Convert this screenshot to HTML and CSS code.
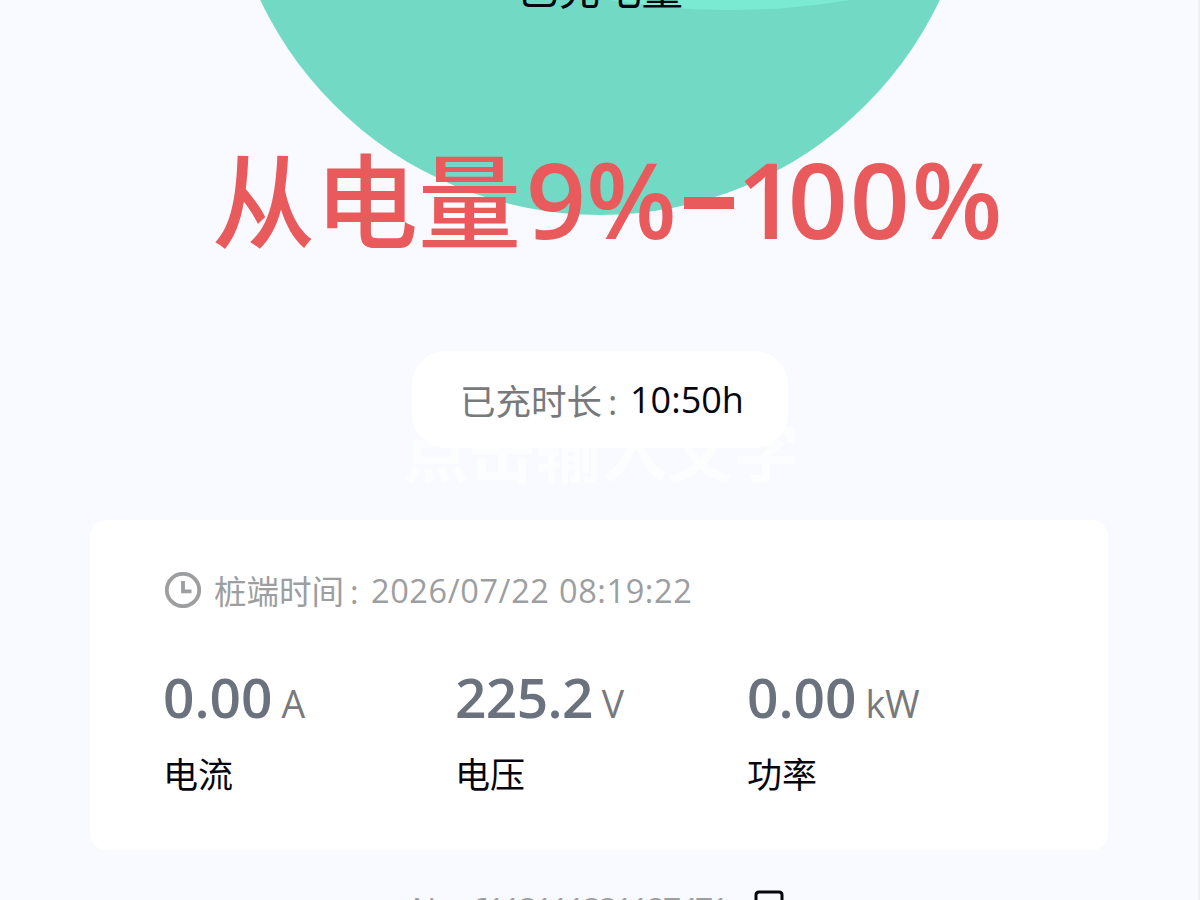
FILE: index.html
```html
<!DOCTYPE html>
<html lang="zh-CN">
<head>
    <meta charset="UTF-8">
    <meta name="viewport" content="width=device-width, initial-scale=1.0">
    <title>充电详情</title>
    <link rel="stylesheet" href="styles.css">
</head>
<body>
    <main class="page">
        <section class="gauge">
            <div class="ball">
                <div class="wave"></div>
            </div>
            <div class="ball-label">已充电量</div>
            <h1 class="headline"><span class="headline-cn">从电量</span><span class="num">9%</span><span class="dash"></span><span class="num"><span class="one">1</span><span class="zeros">00</span>%</span></h1>
        </section>

        <div class="duration">
            <span class="hint">点击输入文字</span>
            <span class="duration-label">已充时长<span class="colon">:</span></span>
            <span class="duration-value">10:50h</span>
        </div>

        <section class="card">
            <div class="time-row">
                <svg class="clock" viewBox="0 0 36 36">
                    <circle cx="18" cy="18" r="16.2"/>
                    <path d="M18 9V19.3H26.5"/>
                </svg>
                <span class="time-label">桩端时间<span class="colon">:</span></span>
                <span class="date">2026/07/22</span>
                <span class="time">08:19:22</span>
            </div>
            <div class="stats">
                <div class="stat">
                    <div class="stat-value">0.00<span class="unit">A</span></div>
                    <div class="stat-name">电流</div>
                </div>
                <div class="stat">
                    <div class="stat-value tight">225.2<span class="unit">V</span></div>
                    <div class="stat-name">电压</div>
                </div>
                <div class="stat">
                    <div class="stat-value">0.00<span class="unit">kW</span></div>
                    <div class="stat-name">功率</div>
                </div>
            </div>
        </section>

        <footer class="order">
            <span class="order-label">No:</span>
            <span class="order-no">6113111331127471</span>
            <svg class="copy" viewBox="0 0 32 32">
                <path d="M4 12V5Q4 2 7 2H27Q30 2 30 5V25H24"/>
                <rect x="2" y="14" width="20" height="16" rx="2"/>
            </svg>
        </footer>
    </main>
</body>
</html>
```

FILE: styles.css
```css
:root {
    --bg: #f8faff;
    --ball: #72dac4;
    --wave: #7aebd2;
    --red: #e85a5c;
    --ink: #05060f;
    --grey: #6b717d;
    --light: #9c9e9f;
}

* {
    margin: 0;
    padding: 0;
    box-sizing: border-box;
}

body {
    font-family: 'Open Sans', 'Noto Sans CJK SC', sans-serif;
    color: var(--ink);
    background-color: var(--bg);
}

.page {
    height: 900px;
    overflow: hidden;
    display: flex;
    flex-direction: column;
    align-items: center;
    box-shadow: inset -2px 0 #f0f1f8;
}

.page > * {
    flex: none;
}

.gauge {
    position: relative;
    width: 100%;
    height: 351px;
    overflow: hidden;
}

.ball {
    position: absolute;
    left: 224px;
    bottom: 136px;
    width: 752px;
    height: 752px;
    border-radius: 50%;
    background-color: var(--ball);
    overflow: hidden;
}

.wave {
    position: absolute;
    left: 206px;
    bottom: 205px;
    width: 600px;
    height: 240px;
    border-radius: 50%;
    background-color: var(--wave);
}

.ball-label {
    position: absolute;
    top: -41px;
    left: 517px;
    font-size: 41.5px;
    line-height: 60px;
    white-space: nowrap;
}

.headline {
    position: absolute;
    top: 123px;
    left: 212px;
    display: flex;
    align-items: center;
    height: 150px;
    color: var(--red);
    font-weight: 600;
    white-space: nowrap;
}

.headline-cn {
    margin: -4px 5px 0 0;
    font-family: 'Noto Sans CJK SC', sans-serif;
    font-size: 103px;
    font-weight: 500;
}

.num {
    font-size: 105px;
}

.dash {
    width: 50px;
    height: 12px;
    margin: 10px 3px 0 7px;
    background-color: var(--red);
}

.one {
    letter-spacing: -9px;
}

.zeros {
    letter-spacing: 2px;
}

.duration {
    position: relative;
    display: flex;
    align-items: center;
    width: 376px;
    height: 97px;
    padding-left: 48px;
    border-radius: 34px;
    background-color: #fff;
    font-size: 36px;
    white-space: nowrap;
}

.duration-label {
    width: 170px;
    color: #77797b;
    font-size: 35.5px;
}

.colon {
    margin-left: 6px;
}

.hint {
    position: absolute;
    top: 62px;
    left: -9px;
    color: rgba(255, 255, 255, 0.6);
    font-size: 66px;
    font-weight: 700;
    line-height: 76px;
}

.card {
    width: 1018px;
    height: 330px;
    margin: 72px 2px 0 0;
    padding: 50px 73px;
    border-radius: 16px;
    background-color: #fff;
}

.time-row {
    display: flex;
    align-items: center;
    height: 40px;
    padding-left: 2px;
    color: var(--light);
    font-size: 32.5px;
    white-space: nowrap;
}

.clock {
    width: 36px;
    height: 36px;
    margin-right: 13px;
    fill: none;
    stroke: var(--light);
    stroke-width: 3.8;
}

.time-label {
    width: 157px;
}

.date {
    width: 188px;
}

.date,
.time {
    letter-spacing: 0.6px;
}

.stats {
    display: flex;
    margin-top: 49px;
}

.stat {
    flex: none;
    width: 292px;
}

.stat-value {
    height: 76px;
    color: var(--grey);
    font-size: 55px;
    font-weight: 600;
    line-height: 76px;
}

.tight {
    letter-spacing: -0.6px;
}

.unit {
    margin-left: 9px;
    color: #77797b;
    font-size: 37.5px;
    font-weight: 400;
}

.stat-name {
    margin-top: 14px;
    font-size: 35px;
    line-height: 52px;
}

.order {
    display: flex;
    width: 376px;
    margin-top: 38px;
    color: var(--light);
    font-size: 32px;
    line-height: 44px;
    white-space: nowrap;
}

.order-label {
    width: 59px;
}

.order-no {
    width: 281px;
    letter-spacing: -2.3px;
}

.copy {
    flex: none;
    width: 32px;
    height: 32px;
    margin-top: 2px;
    fill: none;
    stroke: var(--ink);
    stroke-width: 3;
}
```
